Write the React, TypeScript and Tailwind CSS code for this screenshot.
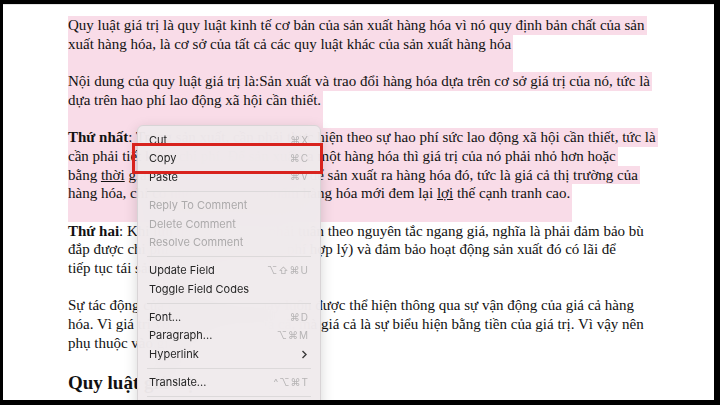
import React from "react";

type Line = { text: React.ReactNode; hl?: boolean; tall?: boolean };

const serif = { fontFamily: '"Liberation Serif", "Times New Roman", serif' };
const sans = { fontFamily: 'Inter, "Liberation Sans", Arial, sans-serif' };

const lines: Line[] = [
  {
    hl: true,
    text: "Quy luật giá trị là quy luật kinh tế cơ bản của sản xuất hàng hóa vì nó quy định bản chất của sản",
  },
  {
    hl: true,
    tall: true,
    text: "xuất hàng hóa, là cơ sở của tất cả các quy luật khác của sản xuất hàng hóa",
  },
  {
    hl: true,
    text: "Nội dung của quy luật giá trị là:Sản xuất và trao đổi hàng hóa dựa trên cơ sở giá trị của nó, tức là",
  },
  { hl: true, tall: true, text: "dựa trên hao phí lao động xã hội cần thiết." },
  {
    hl: true,
    text: (
      <>
        <b>Thứ nhất</b>: Trong sản xuất, cần phải thực hiện theo sự hao phí sức lao động xã hội cần thiết, tức là
      </>
    ),
  },
  {
    hl: true,
    text: "cần phải tiết kiệm chi phí. Để sản xuất ra một hàng hóa thì giá trị của nó phải nhỏ hơn hoặc",
  },
  {
    hl: true,
    text: (
      <>
        bằng <u>thời</u> gian lao động xã hội cần thiết để sản xuất ra hàng hóa đó, tức là giá cả thị trường của
      </>
    ),
  },
  {
    hl: true,
    tall: true,
    text: (
      <>
        hàng hóa, chỉ có như vậy thì sản phẩm hàng hóa mới đem lại <u>lợi</u> thế cạnh tranh cao.
      </>
    ),
  },
  {
    text: (
      <>
        <b>Thứ hai</b>: Khi lưu thông, trao đổi phải tuân theo nguyên tắc ngang giá, nghĩa là phải đảm bảo bù
      </>
    ),
  },
  { text: "đắp được chi phí sản xuất bỏ ra (chi phí hợp lý) và đảm bảo hoạt động sản xuất đó có lãi để" },
  { text: "tiếp tục tái sản xuất.", tall: true },
  { text: "Sự tác động của quy luật giá trị này luôn được thể hiện thông qua sự vận động của giá cả hàng" },
  { text: "hóa. Vì giá trị vốn là cơ sở của giá cả, mà giá cả là sự biểu hiện bằng tiền của giá trị. Vì vậy nên" },
  { text: "phụ thuộc vào giá trị.", tall: true },
];

type Item =
  | { sep: true }
  | { label: string; key?: string; disabled?: boolean; sub?: boolean; sep?: false };

const items: Item[] = [
  { label: "Cut", key: "⌘X" },
  { label: "Copy", key: "⌘C" },
  { label: "Paste", key: "⌘V" },
  { sep: true },
  { label: "Reply To Comment", disabled: true },
  { label: "Delete Comment", disabled: true },
  { label: "Resolve Comment", disabled: true },
  { sep: true },
  { label: "Update Field", key: "⌥⇧⌘U" },
  { label: "Toggle Field Codes" },
  { sep: true },
  { label: "Font...", key: "⌘D" },
  { label: "Paragraph...", key: "⌥⌘M" },
  { label: "Hyperlink", sub: true },
  { sep: true },
  { label: "Translate...", key: "^⌥⌘T" },
  { sep: true },
];

function ContextMenu() {
  return (
    <div
      className="absolute left-[134px] top-[120px] w-[184px] h-[300px] rounded-[6px] border border-[#d8d4d6] bg-[#efeaec]/95 backdrop-blur-xl shadow-[0_4px_14px_rgba(0,0,0,0.16)] pt-[5px]"
      style={sans}
    >
      {items.map((it, i) =>
        it.sep ? (
          <div key={i} className="h-[10px] flex items-center px-[9px]">
            <div className="h-px w-full bg-[#dcd9da]" />
          </div>
        ) : (
          <div
            key={i}
            className="h-[18.4px] flex items-center justify-between pl-[11px] pr-[11px] text-[11px]"
          >
            <span className={it.disabled ? "text-[#acaaab]" : "text-[#262626]"}>{it.label}</span>
            {it.key && <span className="text-[#b6b4b5] text-[10px] tracking-[1px]">{it.key}</span>}
            {it.sub && (
              <svg width="7" height="9" viewBox="0 0 7 9" className="mr-[1px]">
                <path d="M1.5 1 L5 4.5 L1.5 8" fill="none" stroke="#3a3a3a" strokeWidth="1.4" />
              </svg>
            )}
          </div>
        )
      )}
    </div>
  );
}

export default function App() {
  return (
    <div className="w-[720px] h-[405px] bg-black pt-[4px] pl-[3px] pr-[6px] pb-[5px] overflow-hidden">
      <div className="relative w-full h-full bg-white overflow-hidden border-t border-[#e4e4e4]">
        <div className="pl-[65px] pt-[11px] text-[15px] text-[#111]" style={serif}>
          {lines.map((l, i) => (
            <div
              key={i}
              className={`w-fit whitespace-nowrap leading-[18.7px] ${l.tall ? "h-[37.4px]" : "h-[18.7px]"} ${l.hl ? "bg-[#f9dce8] pr-[2px]" : ""}`}
            >
              {l.text}
            </div>
          ))}
          <div className="text-[19px] font-bold leading-[24px]">Quy luật giá trị</div>
        </div>

        <ContextMenu />

        {/* red annotation box */}
        <div className="absolute left-[129px] top-[138px] w-[191px] h-[31px] border-[3px] border-[#d8221d]" />
      </div>
    </div>
  );
}
